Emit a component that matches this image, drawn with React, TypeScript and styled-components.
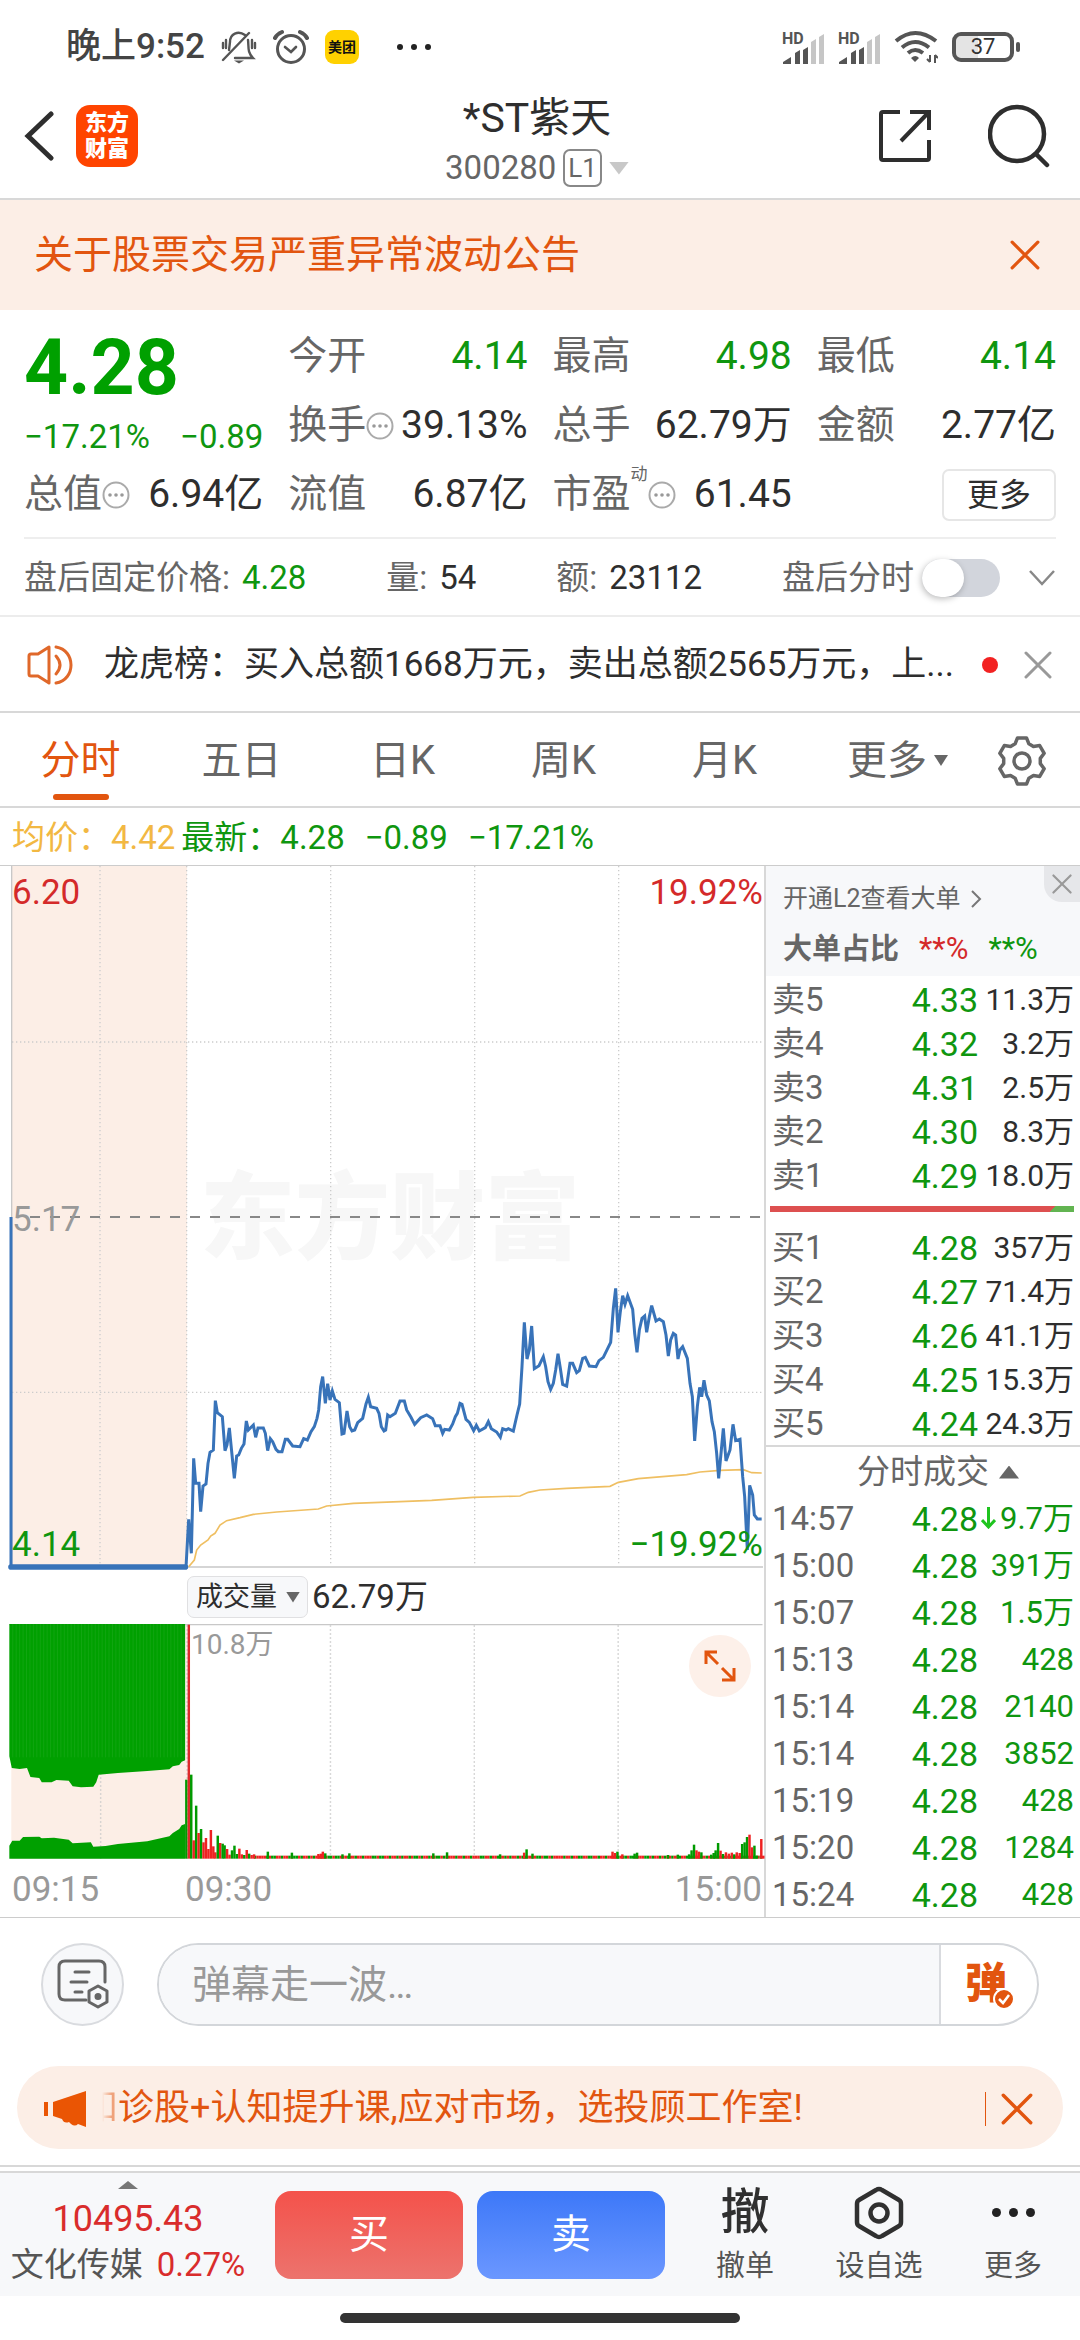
import React from "react";
import styled, { createGlobalStyle, css } from "styled-components";

const GREEN = "#0f960f";
const RED = "#d42a2a";
const ORANGE = "#e2550f";
const INK = "#2e2e2e";
const GRAY = "#666666";
const LINE = "#d8d8d8";
const PEACH = "#fceee6";

const Global = createGlobalStyle`
  *, *::before, *::after { box-sizing: border-box; }
  body {
    margin: 0;
    background: #fff;
    color: ${INK};
    font-family: Roboto, "Noto Sans CJK SC", sans-serif;
    line-height: 1.2;
  }
  button { border: 0; padding: 0; margin: 0; background: none; font: inherit; color: inherit; cursor: pointer; }
  table { border-collapse: collapse; }
  th, td { padding: 0; font-weight: 400; text-align: left; }
  svg { display: block; flex: none; }
`;

const Page = styled.div`
  display: flex;
  flex-direction: column;
`;

/* ---------- status bar ---------- */
const StatusBar = styled.div`
  display: flex;
  align-items: center;
  justify-content: space-between;
  height: 80px;
  padding: 14px 60px 0 66px;
`;
const StatusGroup = styled.div<{ $gap: number }>`
  display: flex;
  align-items: center;
  gap: ${(p) => p.$gap}px;
`;
const Clock = styled.span`
  font-size: 35px;
  line-height: 40px;
  font-weight: 500;
  color: #444;
`;
const MeituanBadge = styled.span`
  width: 34px;
  height: 34px;
  border-radius: 9px;
  background: #ffd100;
  color: #111;
  font-size: 14px;
  line-height: 34px;
  font-weight: 700;
  text-align: center;
`;
const Dots = styled.span<{ $size: number; $gap: number; $indent?: number }>`
  display: flex;
  gap: ${(p) => p.$gap}px;
  padding-left: ${(p) => p.$indent || 0}px;
  i {
    width: ${(p) => p.$size}px;
    height: ${(p) => p.$size}px;
    border-radius: 50%;
    background: #222;
  }
`;
const Battery = styled.span`
  display: flex;
  align-items: center;
  &::after {
    content: "";
    width: 4px;
    height: 10px;
    margin-left: 2px;
    border-radius: 2px;
    background: #555;
  }
`;
const BatteryBody = styled.span`
  width: 62px;
  height: 30px;
  border: 4px solid #555;
  border-radius: 9px;
  background: linear-gradient(90deg, #e4e4e4 22px, #fff 22px);
  background-clip: padding-box;
  font-size: 22px;
  line-height: 22px;
  text-align: center;
  color: #333;
`;

/* ---------- header ---------- */
const Header = styled.header`
  display: grid;
  grid-template-columns: 1fr auto 1fr;
  align-items: center;
  height: 120px;
  padding: 0 30px 6px 24px;
  border-bottom: 2px solid ${LINE};
`;
const HeaderSide = styled.div<{ $end?: boolean; $gap: number }>`
  display: flex;
  align-items: center;
  gap: ${(p) => p.$gap}px;
  ${(p) => p.$end && css`justify-content: flex-end;`}
`;
const BrandLogo = styled.span`
  display: grid;
  place-content: center;
  width: 62px;
  height: 62px;
  border-radius: 14px;
  background: #ff4400;
  color: #fff;
  font-size: 22px;
  line-height: 26px;
  font-weight: 900;
`;
const TitleBlock = styled.div`
  display: flex;
  flex-direction: column;
  align-items: center;
  padding-top: 12px;
`;
const Title = styled.h1`
  margin: 0;
  font-size: 41px;
  line-height: 52px;
  font-weight: 400;
`;
const Code = styled.button`
  display: flex;
  align-items: center;
  height: 48px;
  gap: 7px;
  font-size: 33px;
  color: ${GRAY};
`;
const Level = styled.span`
  height: 38px;
  padding: 0 3px;
  border: 2px solid #888;
  border-radius: 7px;
  font-size: 26px;
  line-height: 34px;
`;
const Triangle = styled.span<{ $w: number; $h: number; $color: string; $up?: boolean }>`
  width: ${(p) => p.$w}px;
  height: ${(p) => p.$h}px;
  background: ${(p) => p.$color};
  clip-path: ${(p) => (p.$up ? "polygon(50% 0, 100% 100%, 0 100%)" : "polygon(0 0, 100% 0, 50% 100%)")};
`;

/* ---------- notice ---------- */
const Notice = styled.div`
  display: flex;
  align-items: center;
  justify-content: space-between;
  height: 110px;
  padding: 0 40px 0 34px;
  background: ${PEACH};
  color: ${ORANGE};
  font-size: 39px;
`;

/* ---------- quote ---------- */
const Quote = styled.section`
  padding: 12px 24px 0;
`;
const QuoteGrid = styled.div`
  display: grid;
  grid-template-columns: repeat(4, 1fr);
  grid-auto-rows: 69px;
  column-gap: 25px;
  padding-bottom: 8px;
  border-bottom: 2px solid #eeeeee;
`;
const LastPrice = styled.div`
  grid-row: span 2;
  color: #00a000;
`;
const BigPrice = styled.div`
  font-size: 77px;
  line-height: 92px;
  font-weight: 700;
`;
const Change = styled.div`
  display: flex;
  justify-content: space-between;
  font-size: 33px;
  line-height: 46px;
  color: ${GREEN};
`;
const Stat = styled.div<{ $color?: string }>`
  display: flex;
  align-items: center;
  font-size: 39px;
  color: ${GRAY};
  white-space: nowrap;
  b {
    margin-left: auto;
    font-weight: 400;
    color: ${(p) => p.$color || INK};
  }
  sup {
    align-self: flex-start;
    font-size: 17px;
    line-height: 28px;
  }
`;
const MoreCell = styled.div`
  display: flex;
  align-items: center;
  justify-content: flex-end;
`;
const MoreButton = styled.button`
  width: 114px;
  height: 52px;
  border: 2px solid #e6e6e6;
  border-radius: 7px;
  font-size: 32px;
  line-height: 46px;
`;
const AfterHours = styled.div`
  display: flex;
  align-items: center;
  justify-content: space-between;
  height: 76px;
  padding-top: 2px;
  font-size: 33px;
  color: ${GRAY};
  white-space: nowrap;
`;
const AfterHoursControls = styled.div`
  display: flex;
  align-items: center;
  gap: 28px;
`;
const Pair = styled.span<{ $color?: string }>`
  display: flex;
  align-items: baseline;
  gap: 12px;
  b {
    font-weight: 400;
    color: ${(p) => p.$color || INK};
  }
`;
const SwitchLabel = styled.label`
  display: flex;
  align-items: center;
  gap: 8px;
`;
const Switch = styled.input`
  appearance: none;
  display: flex;
  align-items: center;
  width: 78px;
  height: 38px;
  margin: 0;
  border-radius: 19px;
  background: #d2d5dc;
  &::before {
    content: "";
    width: 42px;
    height: 38px;
    border-radius: 19px;
    background: #fff;
    box-shadow: -1px 2px 6px rgba(0, 0, 0, 0.25);
  }
`;

/* ---------- headline ---------- */
const Headline = styled.div`
  display: flex;
  align-items: center;
  height: 98px;
  padding: 2px 28px 0 27px;
  border-top: 2px solid #ececec;
  border-bottom: 2px solid ${LINE};
`;
const HeadlineText = styled.p`
  flex: 1;
  margin: 0 0 0 31px;
  font-size: 35px;
  white-space: nowrap;
`;
const RedDot = styled.i`
  width: 16px;
  height: 16px;
  margin-right: 26px;
  border-radius: 50%;
  background: #f22222;
`;

/* ---------- tabs ---------- */
const Tabs = styled.nav`
  display: flex;
  height: 95px;
  padding: 2px 26px 0 0;
  border-bottom: 2px solid ${LINE};
`;
const Tab = styled.button<{ $active?: boolean; $wide?: boolean }>`
  display: flex;
  flex: ${(p) => (p.$wide ? "0 0 185px" : "1")};
  align-items: center;
  justify-content: center;
  gap: 7px;
  position: relative;
  font-size: 40px;
  color: ${(p) => (p.$active ? ORANGE : GRAY)};
  ${(p) =>
    p.$active &&
    css`
      &::after {
        content: "";
        position: absolute;
        bottom: 6px;
        left: calc(50% - 28px);
        width: 56px;
        height: 6px;
        border-radius: 3px;
        background: ${ORANGE};
      }
    `}
`;
const GearButton = styled.button`
  display: grid;
  place-items: center;
  width: 64px;
`;

/* ---------- legend ---------- */
const Legend = styled.div`
  display: flex;
  align-items: center;
  gap: 20px;
  height: 57px;
  padding: 2px 12px 0;
  font-size: 33px;
  color: ${GREEN};
`;
const Average = styled.span`
  margin-right: -14px;
  color: #f2b843;
`;

/* ---------- market ---------- */
const Market = styled.section`
  display: grid;
  grid-template-columns: 1fr 316px;
  border-top: 1px solid #ccc;
  border-bottom: 1px solid #ccc;
`;
const Charts = styled.div`
  display: flex;
  flex-direction: column;
`;
const PriceChart = styled.div`
  position: relative;
  height: 702px;
`;
const AuctionShade = styled.div`
  position: absolute;
  top: 0;
  bottom: 0;
  left: 12px;
  width: 175px;
  background: ${PEACH};
`;
const Plot = styled.svg`
  position: relative;
  width: 100%;
  height: 100%;
  overflow: visible;
`;
const Watermark = styled.span`
  position: absolute;
  top: 299px;
  left: 200px;
  font-size: 95px;
  line-height: 110px;
  font-weight: 900;
  color: #f7f7f7;
`;
const AxisLabel = styled.span<{ $color: string; $top?: number; $bottom?: number; $right?: boolean }>`
  position: absolute;
  ${(p) => (p.$top !== undefined ? `top: ${p.$top}px;` : `bottom: ${p.$bottom}px;`)}
  ${(p) => (p.$right ? "right: 1px;" : "left: 12px;")}
  font-size: 35px;
  line-height: 40px;
  color: ${(p) => p.$color};
`;
const VolumeBar = styled.div`
  display: flex;
  align-items: center;
  gap: 4px;
  height: 56px;
  padding: 2px 0 0 187px;
  font-size: 33px;
`;
const VolumeSelect = styled.button`
  display: flex;
  align-items: center;
  gap: 9px;
  height: 42px;
  padding: 0 7px 0 8px;
  border: 1px solid #e0e0e2;
  border-radius: 7px;
  background: #f7f8fa;
  font-size: 27px;
`;
const VolumeChart = styled.div`
  position: relative;
  height: 236px;
`;
const VolumeMax = styled.span`
  position: absolute;
  top: 4px;
  left: 191px;
  font-size: 28px;
  line-height: 34px;
  color: #999;
`;
const Expand = styled.button`
  position: absolute;
  top: 11px;
  right: 13px;
  display: grid;
  place-items: center;
  width: 62px;
  height: 62px;
  border-radius: 50%;
  background: #fdf0e9;
`;
const TimeAxis = styled.div`
  display: grid;
  grid-template-columns: 173px 1fr auto;
  align-items: center;
  height: 57px;
  padding: 2px 2px 0 12px;
  font-size: 35px;
  color: #999;
`;

/* ---------- order book ---------- */
const Book = styled.aside`
  display: flex;
  flex-direction: column;
  border-left: 2px solid ${LINE};
`;
const BookHead = styled.div`
  position: relative;
  height: 110px;
  padding: 10px 0 0 17px;
  background: #f7f8fa;
`;
const BookBody = styled.div`
  padding-top: 1px;
`;
const LevelTwo = styled.a`
  display: flex;
  align-items: center;
  gap: 9px;
  font-size: 25px;
  line-height: 46px;
  color: ${GRAY};
  text-decoration: none;
`;
const Ratio = styled.div`
  display: flex;
  gap: 20px;
  font-size: 31px;
  line-height: 54px;
  strong {
    font-size: 29px;
    font-weight: 700;
    color: ${GRAY};
  }
`;
const Tint = styled.span<{ $color: string }>`
  color: ${(p) => p.$color};
`;
const CloseTab = styled.button`
  position: absolute;
  top: 0;
  right: 0;
  display: grid;
  place-items: center;
  width: 36px;
  height: 36px;
  border-bottom-left-radius: 18px;
  background: #e6e7ea;
`;
const Rows = styled.table<{ $row: number; $vol: number }>`
  width: 100%;
  tr { height: ${(p) => p.$row}px; }
  th {
    padding: 2px 0 0 6px;
    font-size: 33px;
    line-height: 40px;
    color: ${GRAY};
  }
  td {
    padding-top: 2px;
    font-size: 34px;
    line-height: 40px;
    text-align: right;
    color: ${GREEN};
    white-space: nowrap;
  }
  td:last-child {
    width: 102px;
    padding-right: 6px;
    font-size: ${(p) => p.$vol}px;
  }
`;
const Quantity = styled.td`
  && { color: ${INK}; }
`;
const Strength = styled.div`
  height: 6px;
  margin: 9px 6px 13px 4px;
  background: linear-gradient(135deg, #dd5050 92%, #62b451 92%);
`;
const TradesHead = styled.button`
  display: flex;
  align-items: center;
  justify-content: center;
  gap: 10px;
  width: 100%;
  height: 49px;
  padding: 3px 0 0 30px;
  border-top: 2px solid ${LINE};
  font-size: 33px;
  color: ${GRAY};
`;
const TickArrow = styled.svg`
  display: inline-block;
  margin-right: 4px;
`;

/* ---------- comment bar ---------- */
const CommentBar = styled.form`
  display: flex;
  align-items: center;
  gap: 33px;
  height: 132px;
  padding: 0 41px;
`;
const RoundButton = styled.button`
  display: grid;
  place-items: center;
  width: 83px;
  height: 83px;
  border: 2px solid #d9dbdf;
  border-radius: 50%;
  background: #f7f8fa;
`;
const CommentBox = styled.div`
  display: flex;
  flex: 1;
  height: 83px;
  overflow: hidden;
  border: 2px solid #d3d6da;
  border-radius: 42px;
`;
const CommentInput = styled.input`
  flex: 1;
  min-width: 0;
  padding: 2px 0 0 33px;
  border: 0;
  border-right: 2px solid #d9dbdf;
  background: #f7f8fa;
  font: inherit;
  font-size: 39px;
  &::placeholder { color: #999; opacity: 1; }
`;
const Danmaku = styled.button`
  position: relative;
  width: 96px;
  padding-right: 6px;
  font-size: 42px;
  line-height: 76px;
  font-weight: 900;
  color: ${ORANGE};
  svg {
    position: absolute;
    right: 22px;
    bottom: 14px;
  }
`;

/* ---------- promo ---------- */
const Promo = styled.div`
  display: flex;
  align-items: center;
  height: 83px;
  margin: 16px 17px;
  padding: 2px 30px 0 27px;
  border-radius: 42px;
  background: ${PEACH};
  color: ${ORANGE};
  font-size: 36px;
`;
const FadingGlyph = styled.span`
  margin-left: -5px;
  mask-image: linear-gradient(90deg, transparent 20px, rgba(0, 0, 0, 0.5) 30px);
`;
const Marquee = styled.p`
  flex: 1;
  margin: 0;
  white-space: nowrap;
`;
const PromoRule = styled.i`
  width: 1px;
  height: 34px;
  margin-right: 15px;
  background: ${ORANGE};
`;

/* ---------- bottom bar ---------- */
const BottomBar = styled.footer`
  display: flex;
  height: 131px;
  border-top: 2px solid ${LINE};
  padding-top: 4px;
`;
const BottomInner = styled.div`
  display: flex;
  flex: 1;
  align-items: center;
  border-top: 2px solid ${LINE};
  background: #f7f8fa;
`;
const IndexButton = styled.button`
  display: flex;
  flex: 0 0 256px;
  flex-direction: column;
  align-items: center;
  align-self: stretch;
  padding-top: 8px;
  font-size: 36px;
  line-height: 46px;
  color: #d92c2c;
  white-space: nowrap;
`;
const IndexValue = styled.span`
  margin-top: 7px;
`;
const IndexName = styled.span`
  display: flex;
  gap: 14px;
  font-size: 33px;
  span { color: #555; }
`;
const TradeButtons = styled.div`
  display: flex;
  gap: 14px;
  padding: 0 13px 0 19px;
`;
const TradeButton = styled.button<{ $from: string; $to: string }>`
  width: 188px;
  height: 88px;
  border-radius: 16px;
  background: linear-gradient(${(p) => p.$from}, ${(p) => p.$to});
  color: #fff;
  font-size: 40px;
`;
const NavItems = styled.div`
  display: flex;
  flex: 1;
`;
const NavItem = styled.button`
  display: flex;
  flex: 1;
  flex-direction: column;
  align-items: center;
  gap: 8px;
  font-size: 29px;
  line-height: 36px;
  color: #555;
`;
const NavIcon = styled.span`
  display: grid;
  place-items: center;
  height: 54px;
  font-size: 49px;
  line-height: 54px;
  font-weight: 500;
  color: #303030;
`;
const HomeArea = styled.div`
  display: flex;
  justify-content: center;
  padding: 17px 0;
  &::after {
    content: "";
    width: 37%;
    height: 10px;
    border-radius: 5px;
    background: #333;
  }
`;

/* ---------- icons ---------- */
const CrossIcon = ({ size, color, width = 3 }: { size: number; color: string; width?: number }) => (
  <svg width={size} height={size} viewBox="0 0 28 28" stroke={color} strokeWidth={width} strokeLinecap="round">
    <path d="M2 2 26 26M26 2 2 26" />
  </svg>
);
const MutedBell = () => (
  <svg width="36" height="34" viewBox="0 0 36 34" fill="none" stroke="#555" strokeWidth="2.4" strokeLinecap="round">
    <path d="M2 30 28 3M24 5C17 0 9 4 9 12l-1 8M27 10c1 7-1 12 5 18H14M2 13v5M5 10v8M31 10v8M34 13v5" />
    <path d="M13 30.500h10l-5 3z" fill="#555" stroke="none" />
  </svg>
);
const AlarmIcon = () => (
  <svg width="36" height="36" viewBox="0 0 36 36" fill="none" stroke="#555" strokeWidth="3" strokeLinecap="round">
    <circle cx="18" cy="20" r="13.500" />
    <path d="M12 18l6 5 5-5" strokeWidth="2.600" />
    <path d="M2 9Q4 5 9 3M27 3q5 2 7 6" strokeWidth="4" />
  </svg>
);
const SignalIcon = () => (
  <svg width="42" height="38" viewBox="0 -4 42 38">
    <text x="0" y="12" fontSize="16" fontWeight="700" fill="#555">HD</text>
    <path d="M1 32v-2l8-5v7zM13 32V21l5-3v14zM21 32v-14l5-3v17z" fill="#555" />
    <path d="M29 32V10l5-3v25zM37 32V5l5-3v30z" fill="#c6c6c6" />
  </svg>
);
const WifiIcon = () => (
  <svg width="44" height="34" viewBox="0 0 44 34" fill="none" stroke="#555" strokeWidth="4">
    <path d="M2 11Q21-5 42 11M8 17.500q13-11 27 0M14 23q7-6 15 0" />
    <path d="M17 28q4.500-4 8 0l-4 4z" fill="#555" stroke="none" />
    <path d="M36 25v7M41 33v-8M33 29l3 3M44 28l-3-3" strokeWidth="2" />
  </svg>
);
const BackIcon = () => (
  <svg width="30" height="50" viewBox="0 0 30 50" fill="none" stroke={INK} strokeWidth="5" strokeLinecap="round">
    <path d="M27 3 4 25l23 22" />
  </svg>
);
const ShareIcon = () => (
  <svg width="54" height="54" viewBox="0 0 54 54" fill="none" stroke={INK} strokeWidth="4">
    <path d="M22 3H5Q3 3 3 5v44q0 2 2 2h44q2 0 2-2V31M32 3h19v18M51 3 23 32" />
  </svg>
);
const SearchIcon = () => (
  <svg width="62" height="64" viewBox="0 0 62 64" fill="none" stroke={INK} strokeWidth="4.500" strokeLinecap="round">
    <circle cx="29" cy="30" r="27" />
    <path d="M48 50l11 11" />
  </svg>
);
const InfoIcon = () => (
  <svg width="28" height="28" viewBox="0 0 28 28">
    <circle cx="14" cy="14" r="12.500" fill="none" stroke="#aaa" strokeWidth="2" />
    <g fill="#999"><circle cx="8" cy="14" r="1.800" /><circle cx="14" cy="14" r="1.800" /><circle cx="20" cy="14" r="1.800" /></g>
  </svg>
);
const ChevronDown = () => (
  <svg width="28" height="18" viewBox="0 0 28 18" fill="none" stroke="#888" strokeWidth="2.500">
    <path d="M2 2l12 13L26 2" />
  </svg>
);
const SpeakerIcon = () => (
  <svg width="46" height="40" viewBox="0 0 46 40" fill="none" stroke="#e0682a" strokeWidth="3" strokeLinejoin="round" strokeLinecap="round">
    <path d="M2 11q0-2 2-2h7L22 2v36L11 31H4q-2 0-2-2z" />
    <path d="M29 11q8 9 0 18M29 2c20 3 20 33 0 36" />
  </svg>
);
const gearPoints = Array.from({ length: 6 }, (_, k) =>
  [[-22, 18.500], [-11, 23.5], [11, 23.5], [22, 18.500]].map(([offset, radius]) => {
    const angle = ((k * 60 - 90 + offset) * Math.PI) / 180;
    return `${(25 + radius * Math.cos(angle)).toFixed(1)},${(25 + radius * Math.sin(angle)).toFixed(1)}`;
  }).join(" ")
).join(" ");
const GearIcon = () => (
  <svg width="50" height="50" viewBox="0 0 50 50" fill="none" stroke={GRAY} strokeWidth="3.500" strokeLinejoin="round">
    <polygon points={gearPoints} />
    <circle cx="25" cy="25" r="8" />
  </svg>
);
const ExpandIcon = () => (
  <svg width="32" height="32" viewBox="0 0 32 32" fill="none" stroke={ORANGE} strokeWidth="3">
    <path d="M13 2H2v12M2 2l12 12M30 18v12H18M30 30 18 18" />
  </svg>
);
const SettingsCard = () => (
  <svg width="52" height="50" viewBox="0 0 52 50" fill="none" stroke={GRAY} strokeWidth="3" strokeLinecap="round">
    <path d="M29 41H8q-6 0-6-6V8q0-6 6-6h34q6 0 6 6v15M18 13h14M14 23h16M18 33h7" />
    <path d="M41 27l9 5v11l-9 5-9-5V32z" strokeLinejoin="round" />
    <circle cx="41" cy="37.500" r="2" fill={GRAY} />
  </svg>
);
const CheckBadge = () => (
  <svg width="22" height="22" viewBox="0 0 22 22">
    <circle cx="11" cy="11" r="10" fill={ORANGE} stroke="#fff" strokeWidth="2" />
    <path d="M6 11l4 4 6-8" fill="none" stroke="#fff" strokeWidth="2.500" />
  </svg>
);
const HornIcon = () => (
  <svg width="43" height="36" viewBox="0 0 43 36" fill="#ea5504">
    <path d="M0 11h4v14H0zM9 11 42 0v36l-8-3q-3 3-7 0l-2-2q-5 2-7-3l-9-3z" />
  </svg>
);
const HexIcon = () => (
  <svg width="50" height="54" viewBox="0 0 50 54" fill="none" stroke="#303030" strokeWidth="4.500" strokeLinejoin="round">
    <path d="M22 4q3-2 6 0l17 10q2 1 2 4v18q0 3-2 4L28 50q-3 2-6 0L5 40q-2-1-2-4V18q0-3 2-4z" />
    <circle cx="25" cy="27" r="8.500" />
  </svg>
);

/* ---------- chart data: coordinates are in thirds of a pixel, origin at the chart's top left ---------- */
type Point = [number, number];
const shift = (points: Point[], dx: number, dy: number) =>
  points.map(([x, y]) => `${x + dx},${y + dy}`).join(" ");

const morning: Point[] = [
  [558,1102],[566,958],[574,1060],[581,775],[587,850],[597,850],[602,935],[609,858],[618,852],[624,790],[630,757],[640,750],[646,602],[652,638],[667,650],[675,752],[681,735],[688,684],[703,835],[710,768],[716,765],[724,745],[732,732],[739,663],[745,690],[760,675],[767,712],[774,684],[790,684],[796,700],[803,752],[811,716],[818,725],[828,748],[835,755],[846,755],[856,718],[863,718],[878,738],[900,740],[911,716],[922,720],[933,695],[943,680],[951,655],[956,630],[962,560],[968,530],[976,610],[983,551],[990,600],[997,573],[1005,598],[1018,608],[1026,702],[1032,700],[1041,633],[1049,680],[1056,693],[1064,690],[1073,668],[1088,655],[1098,612],[1105,592],[1112,620],[1130,625],[1137,640],[1144,680],[1152,693],[1157,690],[1163,645],[1170,650],[1186,640],[1200,603],
];
const afternoon: Point[] = [
  [0,453],[13,453],[20,480],[33,502],[44,523],[62,503],[80,495],[98,506],[106,527],[120,527],[128,550],[134,538],[148,540],[158,522],[166,500],[172,490],[180,460],[186,463],[198,508],[208,517],[221,542],[229,526],[238,543],[256,533],[265,515],[274,536],[290,546],[301,562],[308,536],[318,540],[325,536],[340,543],[351,495],[359,462],[366,350],[373,217],[381,327],[388,300],[395,228],[403,356],[417,347],[430,320],[437,350],[444,395],[452,418],[460,400],[467,360],[474,311],[481,355],[488,403],[500,408],[510,340],[518,340],[530,368],[538,362],[548,325],[556,322],[568,348],[588,350],[597,332],[610,322],[632,277],[640,175],[647,115],[654,247],[661,185],[668,137],[675,163],[683,137],[698,178],[704,250],[711,307],[718,240],[726,205],[734,198],[740,247],[748,200],[755,167],[768,213],[778,207],[790,215],[798,255],[805,318],[812,270],[820,250],[827,255],[834,327],[840,300],[848,290],[862,325],[870,400],[877,440],[884,573],[892,470],[899,412],[905,440],[912,391],[920,435],[928,453],[936,515],[943,545],[950,610],[956,685],[964,600],[970,535],[978,633],[990,600],[999,523],[1007,572],[1020,568],[1028,680],[1034,740],[1042,900],[1049,706],[1058,735],[1063,795],[1072,807],[1085,807],
];
const averageMorning: Point[] = [
  [566,1100],[583,1080],[590,1050],[602,1035],[624,1020],[632,1008],[645,1000],[660,975],[680,962],[720,953],[760,943],[830,936],[955,927],[980,918],[1060,910],[1200,905],
];
const averageAfternoon: Point[] = [
  [95,751],[220,742],[360,738],[385,727],[420,720],[500,715],[630,709],[655,697],[715,686],[860,674],[900,666],[960,661],[1030,659],[1055,668],[1085,669],
];
const priceLine = `${shift(morning, 0, 1002)} ${shift(afternoon, 1200, 1152)}`;
const averageLine = `${shift(averageMorning, 0, 1002)} ${shift(averageAfternoon, 1200, 1152)}`;

const PricePlot = () => (
  <Plot viewBox="0 0 2292 2106" preserveAspectRatio="none" fill="none">
    <g stroke="#cccccc" strokeWidth="4" strokeDasharray="4 8">
      <path d="M300 0V2100M560 0V2100M992 0V2100M1424 0V2100M1856 0V2100" />
      <path d="M36 528H2286M36 1579H2286" />
    </g>
    <path d="M35 0V2103H2289" stroke="#c8c8c8" strokeWidth="4" />
    <path d="M90 1053H2286" stroke="#888" strokeWidth="6" strokeDasharray="30 30" />
    <polyline points={averageLine} stroke="#efbf62" strokeWidth="5" />
    <polyline points={`33,1053 33,2104 ${priceLine}`} stroke="#3873b9" strokeWidth="9" />
    <path d="M33 2103H556" stroke="#3873b9" strokeWidth="17" strokeLinecap="round" />
  </Plot>
);

const upperAuction: Point[] = [
  [19,590],[24,625],[40,628],[55,625],[62,652],[80,655],[85,668],[105,668],[115,661],[140,663],[148,680],[165,683],[190,681],[196,668],[201,645],[240,640],[300,634],[345,629],[352,620],[365,616],[370,606],[377,602],
];
const lowerAuction: Point[] = [
  [377,793],[370,797],[365,808],[352,820],[345,830],[300,845],[240,853],[215,859],[190,861],[185,848],[148,851],[140,840],[110,834],[85,836],[80,831],[47,832],[40,843],[25,843],[19,858],
];
type Bar = [x: number, top: number, rising: 0 | 1];
const bars: Bar[] = [
  [379,660,0],[389,645,0],[394,842,1],[399,738,0],[404,820,1],[409,808,0],[414,848,1],[419,835,1],[424,868,1],[429,811,1],[434,860,1],[438,878,1],[443,828,0],[448,850,1],[453,852,0],[457,857,0],[462,868,1],[467,885,1],[472,872,0],[477,858,0],[482,883,0],[487,867,1],[492,884,1],[497,886,0],[502,871,1],[507,882,0],[512,886,1],[517,884,1],
  [545,876,0],[594,879,0],[648,883,1],[653,882,1],[657,876,1],[662,881,0],[697,884,0],[711,881,0],[882,881,0],[910,878,0],[1018,884,0],[1067,879,1],[1072,869,0],[1084,882,0],[1247,876,1],[1252,880,1],[1257,876,0],[1267,884,1],[1292,882,0],[1297,879,0],[1360,886,0],[1380,885,0],[1403,884,0],[1408,872,0],[1413,855,0],[1418,872,1],[1423,876,1],[1428,878,0],[1448,885,0],[1453,880,0],[1457,872,0],[1462,850,0],[1467,873,1],[1472,883,0],[1478,878,1],[1484,882,1],[1490,879,1],[1495,884,0],[1500,878,1],[1506,880,1],[1511,853,0],[1516,848,0],[1521,832,0],[1526,825,1],[1531,863,1],[1536,858,0],[1541,888,0],[1550,838,1],
];
const VolumePlot = () => (
  <Plot viewBox="0 0 1556 708" preserveAspectRatio="none" fill="none">
    <rect x="23" y="0" width="358" height="704" fill={PEACH} />
    <path d="M19 2H1553" stroke="#c8c8c8" strokeWidth="4" />
    <path d="M205 4V704M381 4V704M673 4V704M966 4V704M1259 4V704" stroke="#cccccc" strokeWidth="3" strokeDasharray="4 8" />
    <g fill="#00a000">
      <polygon points={`19,0 ${shift(upperAuction, 0, -193)} 377,0`} />
      <polygon points={`19,704 377,704 ${shift(lowerAuction, 0, -193)}`} />
    </g>
    <g stroke="#2aad2a" strokeWidth="1">
      {Array.from({ length: 50 }, (_, i) => (
        <path key={i} d={`M${26 + i * 7} 0V400`} />
      ))}
    </g>
    {Array.from({ length: 208 }, (_, i) => (
      <rect key={i} x={517 + i * 5} y="695" width="5" height="9" fill={(i * 7) % 11 < 3 || (i * 5) % 17 < 3 ? "#009a00" : "#ee2222"} />
    ))}
    {bars.map(([x, top, rising]) => (
      <rect key={x} x={x - 2} y={top - 193} width="5" height={897 - top} fill={rising ? "#ee2222" : "#009a00"} />
    ))}
    <rect x="382" y="2" width="5" height="702" fill="#dd2a2a" />
  </Plot>
);

/* ---------- tables ---------- */
const asks = [["卖5", "4.33", "11.3万"], ["卖4", "4.32", "3.2万"], ["卖3", "4.31", "2.5万"], ["卖2", "4.30", "8.3万"], ["卖1", "4.29", "18.0万"]];
const bids = [["买1", "4.28", "357万"], ["买2", "4.27", "71.4万"], ["买3", "4.26", "41.1万"], ["买4", "4.25", "15.3万"], ["买5", "4.24", "24.3万"]];
const trades = [["14:57", "9.7万"], ["15:00", "391万"], ["15:07", "1.5万"], ["15:13", "428"], ["15:14", "2140"], ["15:14", "3852"], ["15:19", "428"], ["15:20", "1284"], ["15:24", "428"]];

const Levels = ({ rows }: { rows: string[][] }) => (
  <Rows $row={44} $vol={30}>
    <tbody>
      {rows.map(([name, price, volume]) => (
        <tr key={name}>
          <th scope="row">{name}</th>
          <td>{price}</td>
          <Quantity>{volume}</Quantity>
        </tr>
      ))}
    </tbody>
  </Rows>
);

export default function App() {
  return (
    <>
      <Global />
      <Page>
        <StatusBar>
          <StatusGroup $gap={16}>
            <Clock>晚上9:52</Clock>
            <MutedBell />
            <AlarmIcon />
            <MeituanBadge>美团</MeituanBadge>
            <Dots $size={6} $gap={8} $indent={22}><i /><i /><i /></Dots>
          </StatusGroup>
          <StatusGroup $gap={14}>
            <SignalIcon />
            <SignalIcon />
            <WifiIcon />
            <Battery><BatteryBody>37</BatteryBody></Battery>
          </StatusGroup>
        </StatusBar>

        <Header>
          <HeaderSide $gap={22}>
            <button aria-label="返回"><BackIcon /></button>
            <BrandLogo><span>东方</span><span>财富</span></BrandLogo>
          </HeaderSide>
          <TitleBlock>
            <Title>*ST紫天</Title>
            <Code>
              300280<Level>L1</Level>
              <Triangle $w={20} $h={13} $color="#c8c8c8" />
            </Code>
          </TitleBlock>
          <HeaderSide $gap={56} $end>
            <button aria-label="分享"><ShareIcon /></button>
            <button aria-label="搜索"><SearchIcon /></button>
          </HeaderSide>
        </Header>

        <Notice>
          <span>关于股票交易严重异常波动公告</span>
          <button aria-label="关闭公告"><CrossIcon size={30} color={ORANGE} /></button>
        </Notice>

        <Quote>
          <QuoteGrid>
            <LastPrice>
              <BigPrice>4.28</BigPrice>
              <Change><span>−17.21%</span><span>−0.89</span></Change>
            </LastPrice>
            <Stat $color={GREEN}>今开<b>4.14</b></Stat>
            <Stat $color={GREEN}>最高<b>4.98</b></Stat>
            <Stat $color={GREEN}>最低<b>4.14</b></Stat>
            <Stat>换手<InfoIcon /><b>39.13%</b></Stat>
            <Stat>总手<b>62.79万</b></Stat>
            <Stat>金额<b>2.77亿</b></Stat>
            <Stat>总值<InfoIcon /><b>6.94亿</b></Stat>
            <Stat>流值<b>6.87亿</b></Stat>
            <Stat>市盈<sup>动</sup><InfoIcon /><b>61.45</b></Stat>
            <MoreCell><MoreButton>更多</MoreButton></MoreCell>
          </QuoteGrid>
          <AfterHours>
            <Pair $color={GREEN}>盘后固定价格:<b>4.28</b></Pair>
            <Pair>量:<b>54</b></Pair>
            <Pair>额:<b>23112</b></Pair>
            <AfterHoursControls>
              <SwitchLabel>盘后分时<Switch type="checkbox" /></SwitchLabel>
              <button aria-label="展开"><ChevronDown /></button>
            </AfterHoursControls>
          </AfterHours>
        </Quote>

        <Headline>
          <SpeakerIcon />
          <HeadlineText>龙虎榜：买入总额1668万元，卖出总额2565万元，上...</HeadlineText>
          <RedDot />
          <button aria-label="关闭"><CrossIcon size={28} color="#999" /></button>
        </Headline>

        <Tabs>
          <Tab $active>分时</Tab>
          <Tab>五日</Tab>
          <Tab>日K</Tab>
          <Tab>周K</Tab>
          <Tab>月K</Tab>
          <Tab $wide>更多<Triangle $w={14} $h={11} $color={GRAY} /></Tab>
          <GearButton aria-label="设置"><GearIcon /></GearButton>
        </Tabs>

        <Legend>
          <Average>均价：4.42</Average>
          <span>最新：4.28</span>
          <span>−0.89</span>
          <span>−17.21%</span>
        </Legend>

        <Market>
          <Charts>
            <PriceChart>
              <AuctionShade />
              <Watermark>东方财富</Watermark>
              <PricePlot />
              <AxisLabel $color={RED} $top={7}>6.20</AxisLabel>
              <AxisLabel $color={RED} $top={7} $right>19.92%</AxisLabel>
              <AxisLabel $color="#999" $top={334}>5.17</AxisLabel>
              <AxisLabel $color={GREEN} $bottom={3}>4.14</AxisLabel>
              <AxisLabel $color={GREEN} $bottom={3} $right>−19.92%</AxisLabel>
            </PriceChart>
            <VolumeBar>
              <VolumeSelect>成交量<Triangle $w={14} $h={11} $color={GRAY} /></VolumeSelect>
              <span>62.79万</span>
            </VolumeBar>
            <VolumeChart>
              <VolumePlot />
              <VolumeMax>10.8万</VolumeMax>
              <Expand aria-label="全屏"><ExpandIcon /></Expand>
            </VolumeChart>
            <TimeAxis><span>09:15</span><span>09:30</span><span>15:00</span></TimeAxis>
          </Charts>

          <Book>
            <BookHead>
              <LevelTwo href="#level2">
                开通L2查看大单
                <svg width="12" height="18" viewBox="0 0 12 18" fill="none" stroke="#777" strokeWidth="2"><path d="M2 1l8 8-8 8" /></svg>
              </LevelTwo>
              <Ratio>
                <strong>大单占比</strong>
                <Tint $color={RED}>**%</Tint>
                <Tint $color={GREEN}>**%</Tint>
              </Ratio>
              <CloseTab aria-label="关闭盘口"><CrossIcon size={20} color="#999" /></CloseTab>
            </BookHead>
            <BookBody>
              <Levels rows={asks} />
              <Strength />
              <Levels rows={bids} />
            </BookBody>
            <TradesHead>分时成交<Triangle $w={20} $h={13} $color={GRAY} $up /></TradesHead>
            <Rows $row={47} $vol={31}>
              <tbody>
                {trades.map(([time, volume], i) => (
                  <tr key={i}>
                    <th scope="row">{time}</th>
                    <td>4.28</td>
                    <td>
                      {i === 0 && (
                        <TickArrow width="15" height="22" viewBox="0 0 15 22" fill="none" stroke="#1fc41f" strokeWidth="3">
                          <path d="M7.500 0v20M1 13l6.500 7 6.500-7" />
                        </TickArrow>
                      )}
                      {volume}
                    </td>
                  </tr>
                ))}
              </tbody>
            </Rows>
          </Book>
        </Market>

        <CommentBar>
          <RoundButton type="button" aria-label="弹幕设置"><SettingsCard /></RoundButton>
          <CommentBox>
            <CommentInput aria-label="弹幕" placeholder="弹幕走一波…" />
            <Danmaku type="button">弹<CheckBadge /></Danmaku>
          </CommentBox>
        </CommentBar>

        <Promo>
          <HornIcon />
          <FadingGlyph>和</FadingGlyph>
          <Marquee>诊股+认知提升课,应对市场，选投顾工作室!</Marquee>
          <PromoRule />
          <button aria-label="关闭推广"><CrossIcon size={32} color={ORANGE} /></button>
        </Promo>

        <BottomBar>
          <BottomInner>
            <IndexButton>
              <Triangle $w={20} $h={8} $color="#777" $up />
              <IndexValue>10495.43</IndexValue>
              <IndexName><span>文化传媒</span>0.27%</IndexName>
            </IndexButton>
            <TradeButtons>
              <TradeButton $from="#f4524b" $to="#ec736d">买</TradeButton>
              <TradeButton $from="#3d78f8" $to="#6b97ff">卖</TradeButton>
            </TradeButtons>
            <NavItems>
              <NavItem><NavIcon>撤</NavIcon>撤单</NavItem>
              <NavItem><NavIcon><HexIcon /></NavIcon>设自选</NavItem>
              <NavItem><NavIcon><Dots $size={9} $gap={8}><i /><i /><i /></Dots></NavIcon>更多</NavItem>
            </NavItems>
          </BottomInner>
        </BottomBar>
        <HomeArea />
      </Page>
    </>
  );
}
